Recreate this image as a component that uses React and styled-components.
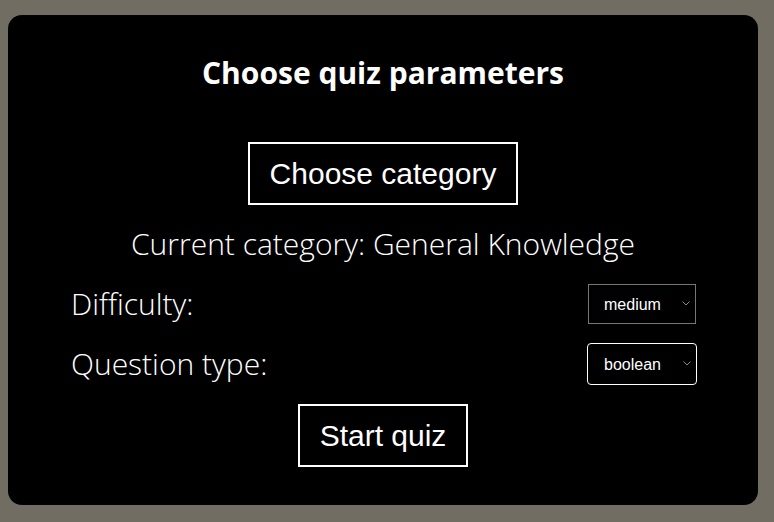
import React from "react";
import styled, { createGlobalStyle } from "styled-components";

const Global = createGlobalStyle`
  html, body { margin: 0; padding: 0; background: #716d63; }
  body { padding: 15px 16px 17px 8px; font-family: "Open Sans", sans-serif; }
`;

const Card = styled.div`
  width: 750px;
  box-sizing: border-box;
  background: #000;
  border-radius: 14px;
  color: #fff;
  display: flex;
  flex-direction: column;
  align-items: center;
  padding: 38px 62px 38px;
`;

const Title = styled.h1`
  margin: 0;
  font-family: "Open Sans", sans-serif;
  font-weight: 700;
  font-size: 30px;
  line-height: 40px;
`;

const OutlineButton = styled.button`
  font-family: "Liberation Sans", Arial, sans-serif;
  font-size: 30px;
  color: #fff;
  background: #000;
  border: 2px solid #fff;
  padding: 0 ${(p) => p.$px}px;
  height: ${(p) => p.$h}px;
  margin-top: ${(p) => p.$mt}px;
  cursor: pointer;
`;

const Info = styled.p`
  margin: 21px 0 0;
  font-weight: 300;
  font-size: 30px;
  line-height: 36px;
`;

const Row = styled.div`
  align-self: stretch;
  display: flex;
  justify-content: space-between;
  align-items: center;
  margin-top: ${(p) => p.$mt}px;
`;

const Label = styled.label`
  font-weight: 300;
  font-size: 30px;
  line-height: 36px;
  padding-left: 1px;
`;

const SelectWrap = styled.div`
  position: relative;
  display: flex;
  margin: ${(p) => (p.$focus ? "0 -1px 0 0" : "0")};
`;

const Select = styled.select`
  appearance: none;
  width: ${(p) => p.$w}px;
  height: ${(p) => p.$h}px;
  box-sizing: border-box;
  background: #000;
  color: #fff;
  font-family: "Liberation Sans", Arial, sans-serif;
  font-size: 16px;
  padding: 0 0 0 ${(p) => p.$pl}px;
  border: ${(p) => (p.$focus ? "1px solid #fff" : "1px solid #767676")};
  border-radius: ${(p) => (p.$focus ? "4px" : "0")};
  outline: none;
`;

const Chevron = styled.svg`
  position: absolute;
  right: 6px;
  top: 50%;
  margin-top: -3px;
  pointer-events: none;
`;

function Dropdown({ value, options, w, h, pl, focus }) {
  return (
    <SelectWrap $focus={focus}>
      <Select defaultValue={value} $w={w} $h={h} $pl={pl} $focus={focus}>
        {options.map((o) => (
          <option key={o}>{o}</option>
        ))}
      </Select>
      <Chevron width="8" height="5" viewBox="0 0 8 5">
        <path d="M0.5 0.5 L4 4 L7.5 0.5" fill="none" stroke="#8a8a8a" strokeWidth="1" />
      </Chevron>
    </SelectWrap>
  );
}

export default function App() {
  return (
    <>
      <Global />
      <Card>
        <Title>Choose quiz parameters</Title>
        <OutlineButton $px={20} $h={63} $mt={49}>Choose category</OutlineButton>
        <Info>Current category: General Knowledge</Info>
        <Row $mt={22}>
          <Label>Difficulty:</Label>
          <Dropdown value="medium" options={["easy", "medium", "hard"]} w={108} h={40} pl={15} />
        </Row>
        <Row $mt={19}>
          <Label>Question type:</Label>
          <Dropdown value="boolean" options={["multiple", "boolean"]} w={110} h={42} pl={16} focus />
        </Row>
        <OutlineButton $px={20} $h={63} $mt={19}>Start quiz</OutlineButton>
      </Card>
    </>
  );
}
